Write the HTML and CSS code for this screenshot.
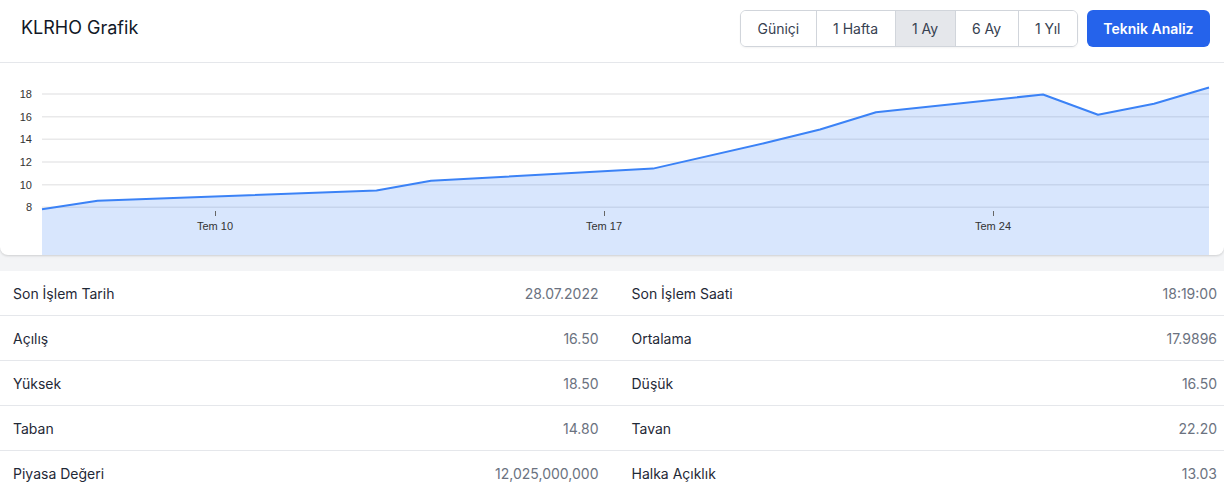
FILE: index.html
```html
<!DOCTYPE html>
<html lang="tr">
<head>
<meta charset="utf-8">
<title>KLRHO Grafik</title>
<link rel="stylesheet" href="styles.css">
</head>
<body>
<div class="card">
  <div class="card-head">
    <h2 class="title">KLRHO Grafik</h2>
    <div class="actions">
      <div class="range-group">
        <button class="range">Güniçi</button>
        <button class="range">1 Hafta</button>
        <button class="range active">1 Ay</button>
        <button class="range">6 Ay</button>
        <button class="range">1 Yıl</button>
      </div>
      <button class="primary">Teknik Analiz</button>
    </div>
  </div>
  <div class="chart">
    <svg class="chart-svg" width="1224" height="192" viewBox="0 0 1224 192" xmlns="http://www.w3.org/2000/svg">
      <g class="grid">
        <line x1="42" x2="1209" y1="31" y2="31"/>
        <line x1="42" x2="1209" y1="53.7" y2="53.7"/>
        <line x1="42" x2="1209" y1="76.3" y2="76.3"/>
        <line x1="42" x2="1209" y1="99" y2="99"/>
        <line x1="42" x2="1209" y1="121.7" y2="121.7"/>
        <line x1="42" x2="1209" y1="144.3" y2="144.3"/>
      </g>
      <g class="ylabels">
        <text x="32" y="35">18</text>
        <text x="32" y="57.7">16</text>
        <text x="32" y="80.3">14</text>
        <text x="32" y="103">12</text>
        <text x="32" y="125.7">10</text>
        <text x="32" y="148.3">8</text>
      </g>
      <path class="area" d="M42,146.3 L97.6,137.7 L376.5,127.5 L431,117.8 L653,105.6 L765,80 L820,66.5 L876,49.3 L1043,31.5 L1098,51.7 L1154,40.8 L1209,24.5 L1209,192 L42,192 Z"/>
      <path class="line" d="M42,146.3 L97.6,137.7 L376.5,127.5 L431,117.8 L653,105.6 L765,80 L820,66.5 L876,49.3 L1043,31.5 L1098,51.7 L1154,40.8 L1209,24.5"/>
      <g class="ticks">
        <line x1="215.5" x2="215.5" y1="148" y2="153"/>
        <line x1="604.5" x2="604.5" y1="148" y2="153"/>
        <line x1="993.5" x2="993.5" y1="148" y2="153"/>
      </g>
      <g class="xlabels">
        <text x="215" y="167">Tem 10</text>
        <text x="604" y="167">Tem 17</text>
        <text x="993" y="167">Tem 24</text>
      </g>
    </svg>
  </div>
</div>

<div class="stats">
  <div class="row">
    <div class="pair"><span class="label">Son İşlem Tarih</span><span class="value">28.07.2022</span></div>
    <div class="pair"><span class="label">Son İşlem Saati</span><span class="value">18:19:00</span></div>
  </div>
  <div class="row">
    <div class="pair"><span class="label">Açılış</span><span class="value">16.50</span></div>
    <div class="pair"><span class="label">Ortalama</span><span class="value">17.9896</span></div>
  </div>
  <div class="row">
    <div class="pair"><span class="label">Yüksek</span><span class="value">18.50</span></div>
    <div class="pair"><span class="label">Düşük</span><span class="value">16.50</span></div>
  </div>
  <div class="row">
    <div class="pair"><span class="label">Taban</span><span class="value">14.80</span></div>
    <div class="pair"><span class="label">Tavan</span><span class="value">22.20</span></div>
  </div>
  <div class="row">
    <div class="pair"><span class="label">Piyasa Değeri</span><span class="value">12,025,000,000</span></div>
    <div class="pair"><span class="label">Halka Açıklık</span><span class="value">13.03</span></div>
  </div>
</div>
</body>
</html>
```

FILE: styles.css
```css
* { box-sizing: border-box; }

html, body {
  margin: 0;
  padding: 0;
}

body {
  background: #f3f4f6;
  font-family: Inter, "Noto Sans", "Liberation Sans", sans-serif;
  color: #111827;
}

.card {
  background: #ffffff;
  border-radius: 0 0 8px 8px;
  box-shadow: 0 1px 3px rgba(0, 0, 0, 0.10), 0 1px 2px rgba(0, 0, 0, 0.06);
  overflow: hidden;
  margin-bottom: 16px;
}

.card-head {
  height: 63px;
  border-bottom: 1px solid #e5e7eb;
  display: flex;
  align-items: center;
  justify-content: space-between;
  padding: 0 14px 6px 21px;
}

.title {
  margin: 0;
  font-size: 18px;
  font-weight: 400;
  color: #111827;
  line-height: 1;
}

.actions {
  display: flex;
  align-items: center;
  gap: 9px;
}

.range-group {
  display: flex;
  border: 1px solid #d1d5db;
  border-radius: 6px;
  overflow: hidden;
  height: 37px;
  box-shadow: 0 1px 2px rgba(0, 0, 0, 0.05);
}

.range {
  font-family: inherit;
  font-size: 14px;
  color: #374151;
  background: #ffffff;
  border: 0;
  border-left: 1px solid #d1d5db;
  padding: 0 16.4px;
  height: 100%;
  margin: 0;
}

.range:first-child { border-left: 0; }

.range.active { background: #e5e7eb; }

.primary {
  font-family: inherit;
  font-size: 14px;
  font-weight: 600;
  color: #ffffff;
  background: #2563eb;
  border: 0;
  border-radius: 6px;
  height: 37px;
  padding: 0 16.5px;
  margin: 0;
}

.chart {
  height: 192px;
}

.chart-svg {
  display: block;
}

.grid line {
  stroke: #e9e9ea;
  stroke-width: 1.5;
}

.ylabels text {
  font-family: "Liberation Sans", Arial, sans-serif;
  font-size: 11px;
  fill: #333333;
  text-anchor: end;
}

.xlabels text {
  font-family: "Liberation Sans", Arial, sans-serif;
  font-size: 11px;
  fill: #333333;
  text-anchor: middle;
}

.ticks line {
  stroke: #666666;
  stroke-width: 1;
}

.area {
  fill: rgba(59, 130, 246, 0.2);
}

.line {
  fill: none;
  stroke: #3b82f6;
  stroke-width: 2;
  stroke-linejoin: round;
}

.stats {
  background: #ffffff;
}

.row {
  display: grid;
  grid-template-columns: 1fr 1fr;
  column-gap: 33px;
  padding: 0 7px 0 13px;
  height: 45px;
  align-items: center;
  border-bottom: 1px solid #e5e7eb;
  font-size: 14px;
}

.pair {
  display: flex;
  justify-content: space-between;
  align-items: center;
}

.label { color: #1f2937; }

.value { color: #6b7280; }
```
